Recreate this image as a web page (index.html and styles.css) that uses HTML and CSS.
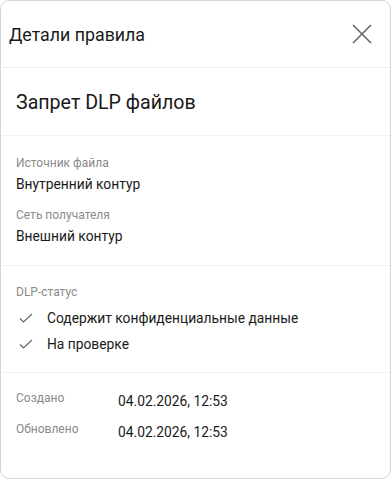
FILE: index.html
```html
<!DOCTYPE html>
<html lang="ru">
<head>
<meta charset="utf-8">
<link rel="stylesheet" href="styles.css">
</head>
<body>
<div class="card">
  <div class="header">
    <span class="header-title">Детали правила</span>
    <button class="close" aria-label="Закрыть">
      <svg width="20" height="20" viewBox="0 0 20 20"><path d="M1 1 L19 19 M19 1 L1 19" stroke="#666" stroke-width="1.6" fill="none"/></svg>
    </button>
  </div>
  <div class="section title-section">
    <div class="rule-title">Запрет DLP файлов</div>
  </div>
  <div class="section fields">
    <div class="field">
      <div class="label">Источник файла</div>
      <div class="value">Внутренний контур</div>
    </div>
    <div class="field">
      <div class="label">Сеть получателя</div>
      <div class="value">Внешний контур</div>
    </div>
  </div>
  <div class="section status">
    <div class="label">DLP-статус</div>
    <div class="check-list">
      <div class="check-item">
        <svg class="check" width="14" height="10" viewBox="0 0 14 10"><path d="M1 5.5 L4.5 9 L13 1" stroke="#666" stroke-width="1.2" fill="none"/></svg>
        <span class="value">Содержит конфиденциальные данные</span>
      </div>
      <div class="check-item">
        <svg class="check" width="14" height="10" viewBox="0 0 14 10"><path d="M1 5.5 L4.5 9 L13 1" stroke="#666" stroke-width="1.2" fill="none"/></svg>
        <span class="value">На проверке</span>
      </div>
    </div>
  </div>
  <div class="dates">
    <div class="date-row">
      <span class="label date-label">Создано</span>
      <span class="value">04.02.2026, 12:53</span>
    </div>
    <div class="date-row">
      <span class="label date-label">Обновлено</span>
      <span class="value">04.02.2026, 12:53</span>
    </div>
  </div>
</div>
</body>
</html>
```
FILE: styles.css
```css
html, body {
  margin: 0;
  padding: 0;
  background: #fff;
}
body {
  font-family: Roboto, "Noto Sans", sans-serif;
  color: #1a1a1a;
}
.card {
  box-sizing: border-box;
  width: 391px;
  height: 479px;
  border: 1px solid #d6d6d6;
  border-radius: 9px;
  display: flex;
  flex-direction: column;
  overflow: hidden;
}
.header {
  height: 66px;
  border-bottom: 1px solid #ededed;
  display: flex;
  align-items: center;
  justify-content: space-between;
  padding: 0 18px 0 7px;
  margin-left: 1px;
}
.header-title {
  font-size: 17.8px;
  color: #1a1a1a;
}
.close {
  border: 0;
  background: none;
  padding: 0;
  width: 20px;
  height: 20px;
  display: flex;
  cursor: pointer;
}
.section {
  border-bottom: 1px solid #f0f0f0;
  margin-left: 1px;
  padding-left: 14px;
}
.title-section {
  height: 67px;
  display: flex;
  align-items: center;
}
.rule-title {
  font-size: 19.6px;
  color: #1a1a1a;
  padding-top: 2px;
}
.fields {
  height: 130px;
  box-sizing: border-box;
  padding-top: 19px;
  display: flex;
  flex-direction: column;
  gap: 13px;
}
.label {
  font-size: 12px;
  color: #8a8a8a;
  line-height: 16px;
}
.value {
  font-size: 13.8px;
  color: #1a1a1a;
  line-height: 20px;
}
.field .label {
  margin-bottom: 3px;
}
.status {
  height: 107px;
  box-sizing: border-box;
  padding-top: 18px;
}
.check-list {
  display: flex;
  flex-direction: column;
  gap: 6px;
  margin-top: 8px;
}
.check-item {
  display: flex;
  align-items: center;
  gap: 14px;
  padding-left: 3px;
  height: 20px;
}
.dates {
  padding: 17px 0 0 15px;
  display: flex;
  flex-direction: column;
  gap: 10px;
}
.date-row {
  display: flex;
  align-items: flex-start;
}
.date-label {
  width: 102px;
}
.date-row .value {
  margin-top: 1px;
}
```
